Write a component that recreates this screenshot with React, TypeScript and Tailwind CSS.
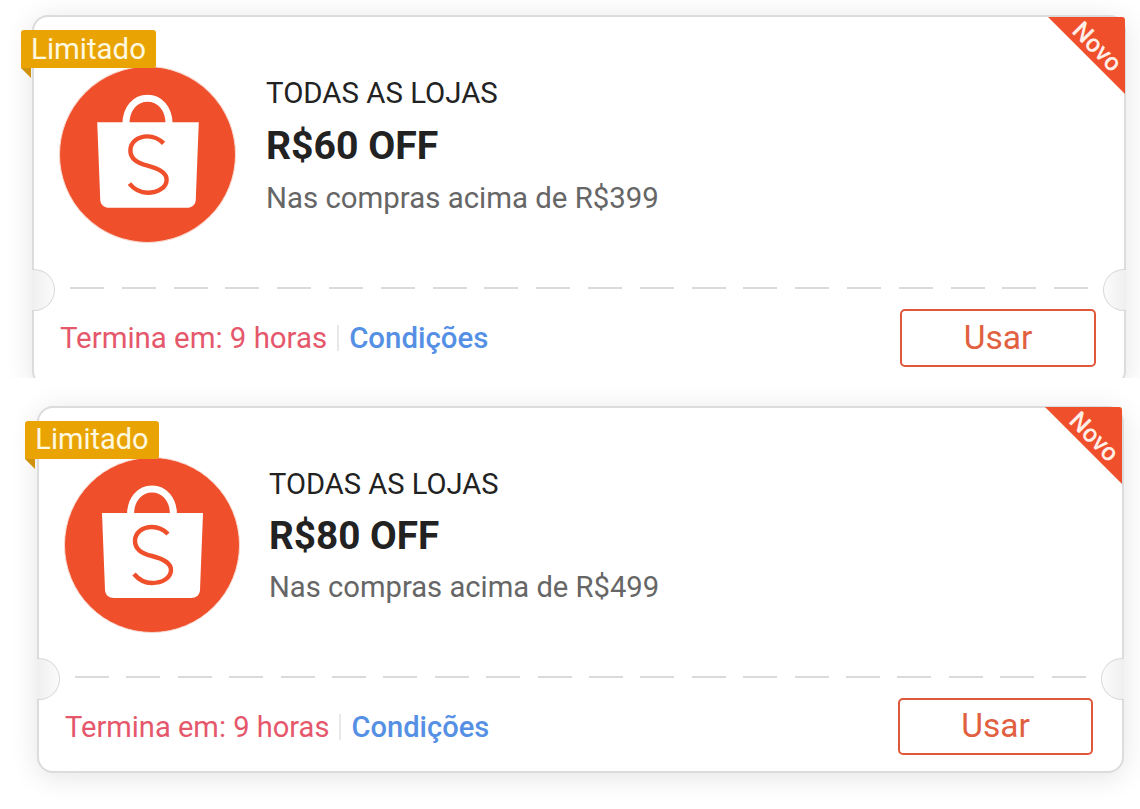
import React from "react";

const ShopeeBag = () => (
    <svg viewBox="0 0 176 176" className="h-full w-full">
        <circle cx="88" cy="88" r="87.5" fill="#ef4f2b" stroke="#f8d9d0" strokeWidth="1" />
        <path d="M66.5 58 C66.5 42 76 32 88 32 C100 32 109.5 42 109.5 58" fill="none" stroke="#fff" strokeWidth="7" />
        <path d="M38 56 H139 L136 133 C135.8 138 132 141 127 141 H50 C45 141 41.2 138 41 133 Z" fill="#fff" />
        <path
            d="M104 77 C99 72 94 70 88 70 C78 70 71 76 71 84 C71 93 79 97 88 99 C100 102 107 106 107 113 C107 121 98 126 88 126 C81 126 75 123 70 117"
            fill="none"
            stroke="#ef4f2b"
            strokeWidth="4.4"
        />
    </svg>
);

const Coupon = ({
    off,
    min,
    large,
}: {
    off: string;
    min: string;
    large: boolean;
}) => (
    <div className={`relative shrink-0 rounded-[16px] border-2 border-[#dcdcdc] bg-white shadow-[0_4px_28px_rgba(0,0,0,0.11)] ${large ? "h-[372px] w-[1094px]" : "h-[367px] w-[1087px]"}`}>
        {/* corner ribbon */}
        <div className={`absolute h-[77px] w-[77px] rounded-tr-[3px] bg-[#ef4f2b] [clip-path:polygon(0_0,100%_0,100%_100%)] ${large ? "top-0 -right-[1px]" : "-top-[1px] right-0"}`} />
        <div className={`absolute w-[64px] rotate-45 text-center text-[25px] leading-[24px] font-medium text-[#ffeee8] ${large ? "top-[18px] right-[-5px]" : "top-[17px] right-[-4px]"}`}>Novo</div>

        <div className={`absolute top-[13px] flex h-[38px] items-center justify-center rounded-[3px] rounded-bl-none bg-[#e9a404] text-[#fff8e0] ${large ? "-left-[13px] w-[135px] text-[29.4px]" : "-left-[14px] w-[134px] text-[29px]"}`}>Limitado</div>
        <div className={`absolute top-[51px] h-[10px] w-[10px] bg-[#d0920a] [clip-path:polygon(0_0,100%_0,100%_100%)] ${large ? "-left-[13px]" : "-left-[14px]"}`} />

        <div className={`flex items-start pt-[49px] pl-[25px] ${large ? "h-[270px]" : "h-[268px]"}`}>
            <div className={`shrink-0 ${large ? "h-[177px] w-[177px]" : "h-[176px] w-[176px]"}`}>
                <ShopeeBag />
            </div>
            <div className={`flex flex-col pt-[9px] ${large ? "ml-[30px]" : "ml-[29px]"}`}>
                <div className={`leading-[36px] text-[#222] ${large ? "text-[29.4px]" : "text-[29.1px]"}`}>TODAS AS LOJAS</div>
                <div className={`leading-[42px] font-bold text-[#222] ${large ? "mt-[14px] text-[39.2px]" : "mt-[13px] text-[38.7px]"}`}>{off}</div>
                <div className={`leading-[36px] text-[#666] ${large ? "mt-[13px] text-[29.4px]" : "mt-[12px] text-[29.2px]"}`}>{min}</div>
            </div>
        </div>

        <div className={`mx-[36px] h-[2px] ${large ? "bg-[repeating-linear-gradient(90deg,#dadada_0,#dadada_34px,transparent_34px,transparent_51.8px)]" : "bg-[repeating-linear-gradient(90deg,#dadada_0,#dadada_34px,transparent_34px,transparent_51.4px)]"}`} />

        {/* ticket notches */}
        <div className={`absolute -left-[2px] h-[42px] w-[23px] rounded-r-full border border-l-0 border-[#d8d8d8] bg-gradient-to-r from-[#efefef] to-[#fbfbfb] ${large ? "top-[252px]" : "top-[250px]"}`} />
        <div className={`absolute -right-[2px] h-[42px] w-[23px] rounded-l-full border border-r-0 border-[#d8d8d8] bg-gradient-to-l from-[#efefef] to-[#fbfbfb] ${large ? "top-[252px]" : "top-[250px]"}`} />

        <div className={`flex items-center justify-between pt-[20px] pl-[26px] ${large ? "pr-[28px]" : "pr-[29px]"}`}>
            <div className={`flex items-center leading-[36px] ${large ? "text-[29.4px]" : "text-[29.1px]"}`}>
                <span className="text-[#e5576b]">Termina em: 9 horas</span>
                <span className="mx-[10px] h-[26px] w-[2px] bg-[#e8e8e8]" />
                <span className="font-medium text-[#5590e4]">Condições</span>
            </div>
            <button className={`flex items-center justify-center rounded-[5px] border-2 border-[#e0573a] text-[33.5px] text-[#e0603f] ${large ? "h-[58px] w-[196px]" : "h-[57px] w-[195px]"}`}>Usar</button>
        </div>
    </div>
);

export default function App() {
    return (
        <div className="flex h-[809px] w-[1140px] flex-col overflow-hidden bg-white font-['Roboto',sans-serif]">
            <div className="h-[378px] shrink-0 overflow-hidden pt-[15px] pl-[32px]">
                <Coupon off="R$60 OFF" min="Nas compras acima de R$399" large />
            </div>
            <div className="flex-1 pt-[28px] pl-[37px]">
                <Coupon off="R$80 OFF" min="Nas compras acima de R$499" large={false} />
            </div>
        </div>
    );
}
